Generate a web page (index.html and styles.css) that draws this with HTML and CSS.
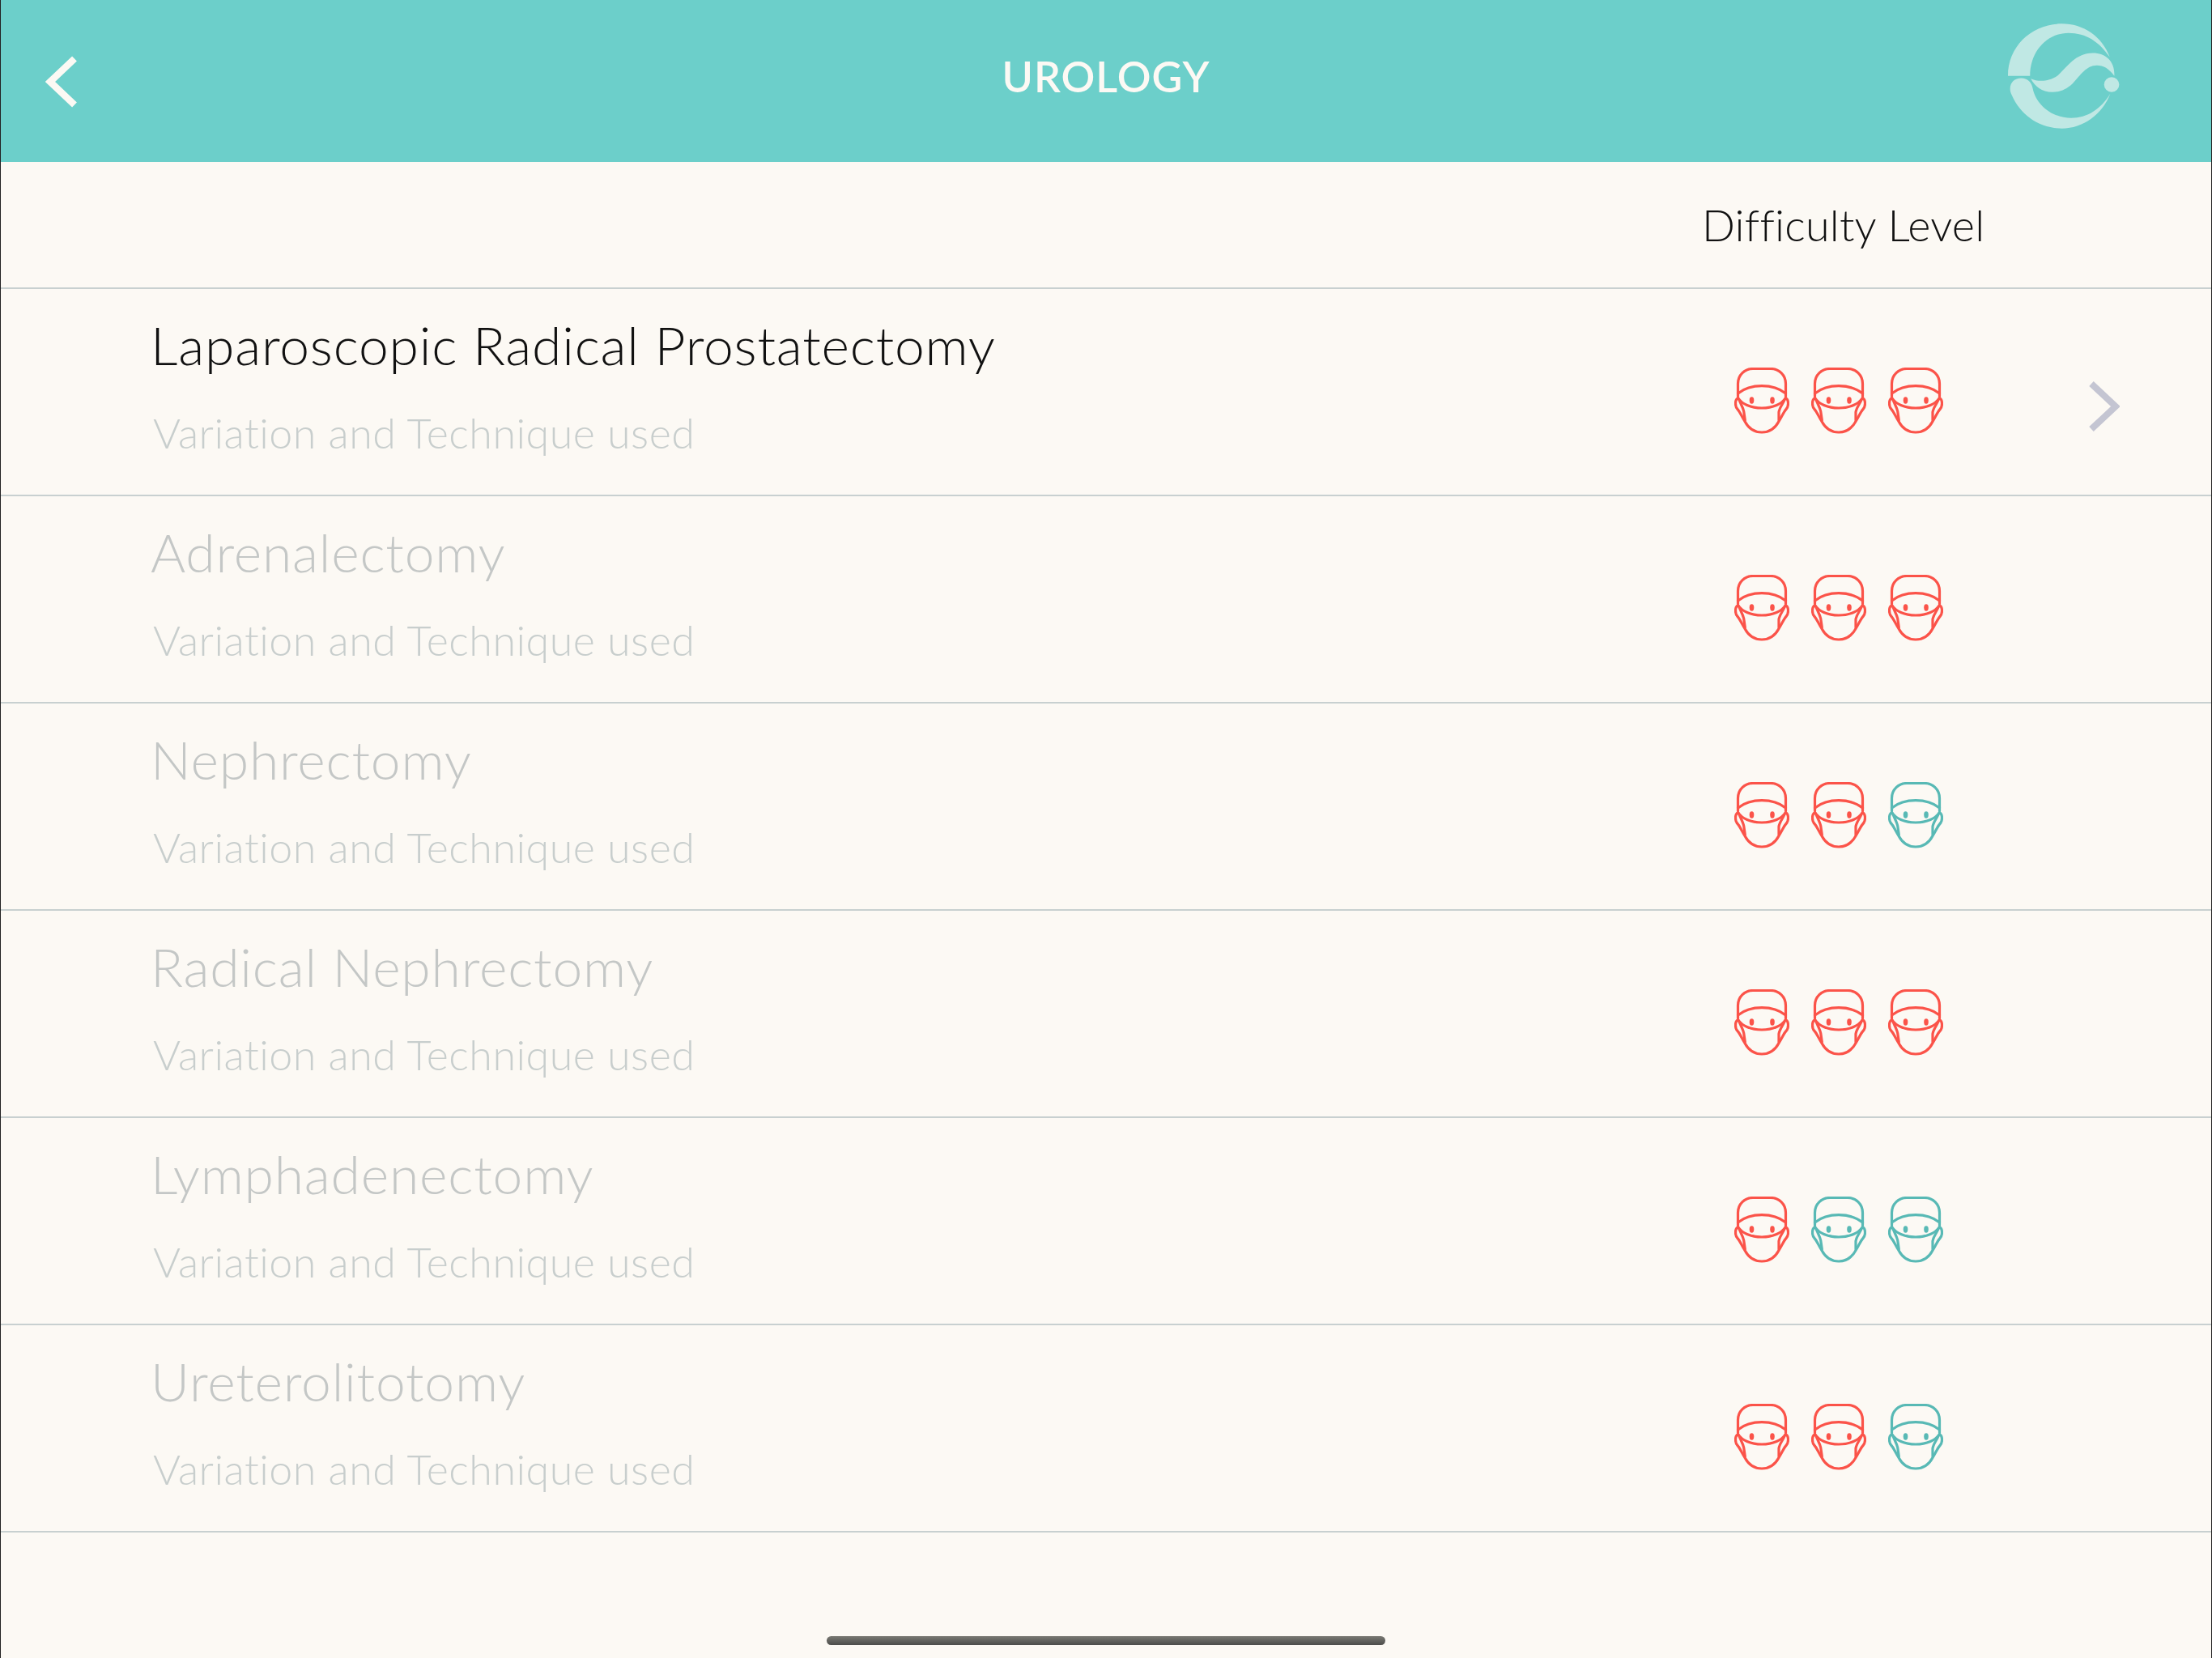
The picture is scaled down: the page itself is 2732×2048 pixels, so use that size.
FILE: index.html
```html
<!DOCTYPE html>
<html lang="en">
<head>
    <meta charset="UTF-8">
    <title>Urology</title>
    <link rel="stylesheet" href="styles.css">
</head>
<body>
    <svg class="sprite" width="0" height="0">
        <symbol id="mask" viewBox="0 0 68 82">
            <g fill="none" stroke="currentColor" stroke-width="3.200" stroke-linecap="round" stroke-linejoin="round">
                <path d="M4.500 36V20C4.500 9 13 1.500 23 1.500H45C55 1.500 63.500 9 63.500 20V36"/>
                <path d="M4.500 32C12 26 22 22.700 34 22.700C46 22.700 56 26 63.500 32"/>
                <path d="M5 38C9 44.500 20 50 34 50C48 50 59 44.500 63 38"/>
                <path d="M5 38.500C2.500 37.500 1.500 41 1.500 44.500C1.500 48 2.500 50 4 51.500C6.500 54 9 60 13 66.500C17 74 24 80 34 80C44 80 51 74 55 66.500C59 60 61.500 54 64 51.500C65.500 50 66.500 48 66.500 44.500C66.500 41 65.500 37.500 63 38.500"/>
                <path d="M6 40C8 45 10.500 49 11.700 54L13.300 65"/>
                <path d="M62 40C60 45 56 49 55 55L55 65"/>
            </g>
            <ellipse cx="21.500" cy="40.500" rx="2.800" ry="4.200" fill="currentColor"/>
            <ellipse cx="47" cy="40.500" rx="2.800" ry="4.200" fill="currentColor"/>
        </symbol>
    </svg>

    <div class="screen">
        <header class="topbar">
            <svg class="back" viewBox="0 0 44 72"><path d="M36 7.500L6 36L36 64.500"/></svg>
            <h1>UROLOGY</h1>
            <svg class="logo" viewBox="180 85 415 395">
                <path d="M180 282C180 170 270 88 380 88C460 88 530 135 558 212C520 155 470 122 405 122C325 122 262 190 262 282Z"/>
                <path d="M188 330C188 305 205 290 230 290C252 290 268 305 272 328C285 390 345 438 415 438C475 438 525 405 560 348C530 425 460 477 380 477C295 477 225 425 195 355C190 345 188 338 188 330Z"/>
                <path d="M265 292C290 303 330 305 365 280C400 250 430 197 495 197C545 197 578 230 575 282C555 255 535 243 510 243C470 243 450 280 420 310C395 333 370 342 345 342C305 342 280 320 265 292Z"/>
                <circle cx="565" cy="314" r="28"/>
            </svg>
        </header>

        <div class="list-head">
            <span>Difficulty Level</span>
        </div>

        <ul class="list">
            <li class="row active">
                <div class="row-text">
                    <div class="row-title">Laparoscopic Radical Prostatectomy</div>
                    <div class="row-sub">Variation and Technique used</div>
                </div>
                <div class="masks">
                    <svg class="hot"><use href="#mask"/></svg>
                    <svg class="hot"><use href="#mask"/></svg>
                    <svg class="hot"><use href="#mask"/></svg>
                </div>
                <svg class="arrow" viewBox="0 0 40 62"><path d="M5 3L35 31L5 59"/></svg>
            </li>
            <li class="row">
                <div class="row-text">
                    <div class="row-title">Adrenalectomy</div>
                    <div class="row-sub">Variation and Technique used</div>
                </div>
                <div class="masks">
                    <svg class="hot"><use href="#mask"/></svg>
                    <svg class="hot"><use href="#mask"/></svg>
                    <svg class="hot"><use href="#mask"/></svg>
                </div>
            </li>
            <li class="row">
                <div class="row-text">
                    <div class="row-title">Nephrectomy</div>
                    <div class="row-sub">Variation and Technique used</div>
                </div>
                <div class="masks">
                    <svg class="hot"><use href="#mask"/></svg>
                    <svg class="hot"><use href="#mask"/></svg>
                    <svg class="cool"><use href="#mask"/></svg>
                </div>
            </li>
            <li class="row">
                <div class="row-text">
                    <div class="row-title">Radical Nephrectomy</div>
                    <div class="row-sub">Variation and Technique used</div>
                </div>
                <div class="masks">
                    <svg class="hot"><use href="#mask"/></svg>
                    <svg class="hot"><use href="#mask"/></svg>
                    <svg class="hot"><use href="#mask"/></svg>
                </div>
            </li>
            <li class="row">
                <div class="row-text">
                    <div class="row-title">Lymphadenectomy</div>
                    <div class="row-sub">Variation and Technique used</div>
                </div>
                <div class="masks">
                    <svg class="hot"><use href="#mask"/></svg>
                    <svg class="cool"><use href="#mask"/></svg>
                    <svg class="cool"><use href="#mask"/></svg>
                </div>
            </li>
            <li class="row">
                <div class="row-text">
                    <div class="row-title">Ureterolitotomy</div>
                    <div class="row-sub">Variation and Technique used</div>
                </div>
                <div class="masks">
                    <svg class="hot"><use href="#mask"/></svg>
                    <svg class="hot"><use href="#mask"/></svg>
                    <svg class="cool"><use href="#mask"/></svg>
                </div>
            </li>
        </ul>

        <div class="home-wrap">
            <div class="home-bar"></div>
        </div>
    </div>
</body>
</html>
```

FILE: styles.css
```css
* {
    box-sizing: border-box;
}

body {
    margin: 0;
    font-family: Lato, "Open Sans", sans-serif;
    font-variant-ligatures: none;
    background-color: #fcf9f4;
}

.sprite {
    display: block;
    height: 0;
}

.screen {
    display: flex;
    flex-direction: column;
    width: 2732px;
    height: 2048px;
    border-left: 1px solid #222222;
    border-right: 1px solid #222222;
    overflow: hidden;
}

.topbar {
    display: grid;
    grid-template-columns: 1fr auto 1fr;
    align-items: center;
    flex: none;
    height: 200px;
    padding: 0 113px 12px 113px;
    background-color: #6ccfca;
}

.topbar h1 {
    margin: 0;
    font-size: 52px;
    font-weight: 600;
    letter-spacing: 1px;
    color: #fcf9f4;
}

.back {
    width: 44px;
    height: 72px;
    margin: 13px 0 0 -58px;
}

.back path {
    fill: none;
    stroke: #fcf9f4;
    stroke-width: 8.5;
}

.logo {
    justify-self: end;
    width: 138px;
    height: 132px;
    fill: #c0e8e4;
}

.list-head {
    display: flex;
    align-items: center;
    flex: none;
    height: 157px;
    padding: 0 0 0 2101px;
    font-size: 54px;
    font-weight: 300;
    letter-spacing: 0.2px;
    color: #111111;
    border-bottom: 2px solid #c8d0d0;
}

.list {
    flex: none;
    margin: 0;
    padding: 0;
    list-style: none;
}

.row {
    display: flex;
    height: 256px;
    border-bottom: 2px solid #c8d0d0;
}

.row-text {
    width: 2141px;
    padding: 25px 0 0 185px;
}

.row-title {
    font-size: 66px;
    font-weight: 300;
    line-height: 88px;
    letter-spacing: 0.8px;
    color: #c4c7c6;
}

.active .row-title {
    color: #111111;
}

.row-sub {
    margin-top: 29px;
    padding-left: 3px;
    font-size: 52px;
    font-weight: 300;
    line-height: 70px;
    letter-spacing: 0.5px;
    color: #c8cecd;
}

.masks {
    display: flex;
    gap: 27px;
    padding-top: 97px;
}

.masks svg {
    width: 68px;
    height: 82px;
}

.hot {
    color: #fb5349;
}

.cool {
    color: #58b9b5;
}

.arrow {
    width: 40px;
    height: 62px;
    margin: 114px 0 0 178px;
}

.arrow path {
    fill: none;
    stroke: #c4c5d2;
    stroke-width: 8;
}

.home-wrap {
    display: flex;
    justify-content: center;
    padding-top: 128px;
}

.home-bar {
    width: 690px;
    height: 11px;
    border-radius: 6px;
    background: linear-gradient(#7a7a74, #4c4c4a);
}
```
